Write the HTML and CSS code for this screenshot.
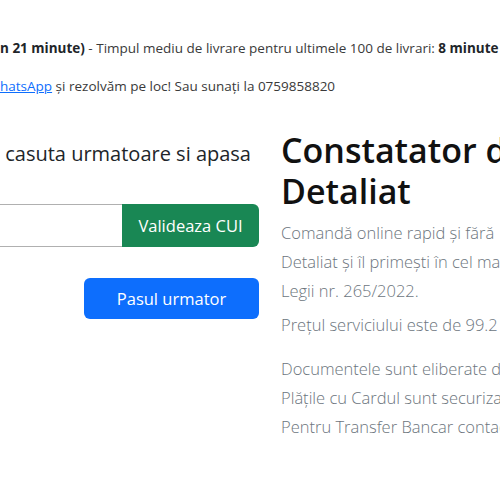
FILE: index.html
```html
<!DOCTYPE html>
<html lang="ro">
<head>
<meta charset="utf-8">
<link rel="stylesheet" href="styles.css">
</head>
<body>
<div class="page">
  <div class="notice">
    <p class="line"><b>n 21 minute)</b> - Timpul mediu de livrare pentru ultimele 100 de livrari: <b>8 minute</b></p>
    <p class="line"><a href="#">hatsApp</a> și rezolvăm pe loc! Sau sunați la 0759858820</p>
  </div>
  <div class="row">
    <div class="col-left">
      <h4 class="prompt">casuta urmatoare si apasa</h4>
      <div class="input-group">
        <input class="form-control" type="text">
        <button class="btn btn-success">Valideaza CUI</button>
      </div>
      <div class="next-wrap">
        <button class="btn btn-primary">Pasul urmator</button>
      </div>
    </div>
    <div class="col-right">
      <h1 class="title">Constatator de Bază<br>Detaliat</h1>
      <p class="lead">Comandă online rapid și fără<br>Detaliat și îl primești în cel mai<br>Legii nr. 265/2022.</p>
      <p class="lead price">Prețul serviciului este de 99.2</p>
      <p class="lead info">Documentele sunt eliberate de<br>Plățile cu Cardul sunt securizate<br>Pentru Transfer Bancar contactați</p>
    </div>
  </div>
</div>
</body>
</html>
```
FILE: styles.css
```css
html, body {
  margin: 0;
  padding: 0;
  background: #fff;
  overflow: hidden;
}
body {
  font-family: "Open Sans", "Noto Sans", sans-serif;
  color: #212529;
  width: 500px;
  height: 500px;
}
.page {
  white-space: nowrap;
}
.notice {
  padding-top: 39px;
}
.line {
  margin: 0 0 19px 0;
  font-size: 13.5px;
  line-height: 19px;
  color: #3a3a3a;
}
.line b {
  font-weight: 700;
  color: #212529;
}
.line a {
  color: #0d6efd;
  text-decoration: underline;
}
.row {
  display: flex;
  margin-top: 34px;
}
.col-left {
  width: 259px;
  flex: none;
  padding-top: 11px;
}
.prompt {
  margin: 0;
  text-align: right;
  padding-right: 8px;
  font-size: 20px;
  font-weight: 500;
  line-height: 26px;
}
.input-group {
  display: flex;
  margin-top: 37px;
  height: 43px;
}
.form-control {
  flex: 1;
  min-width: 0;
  border: 1px solid #b0b0b0;
  border-left: none;
  border-right: none;
  margin: 0;
  padding: 0;
  background: #fff;
}
.btn {
  font-family: inherit;
  font-size: 16.5px;
  border: none;
  border-radius: 6px;
  color: #fff;
  cursor: pointer;
}
.btn-success {
  background: #198754;
  width: 137px;
  border-top-left-radius: 0;
  border-bottom-left-radius: 0;
}
.next-wrap {
  display: flex;
  justify-content: flex-end;
  margin-top: 31px;
}
.btn-primary {
  background: #0d6efd;
  width: 175px;
  height: 41px;
}
.col-right {
  padding-left: 22px;
}
.title {
  margin: 0;
  font-size: 34px;
  line-height: 41px;
  font-weight: 600;
  color: #111;
}
.lead {
  margin: 6px 0 0;
  font-size: 16.5px;
  font-weight: 300;
  line-height: 29px;
  color: #6c757d;
}
.price {
  margin-top: 5px;
}
.info {
  margin-top: 15px;
}
```
